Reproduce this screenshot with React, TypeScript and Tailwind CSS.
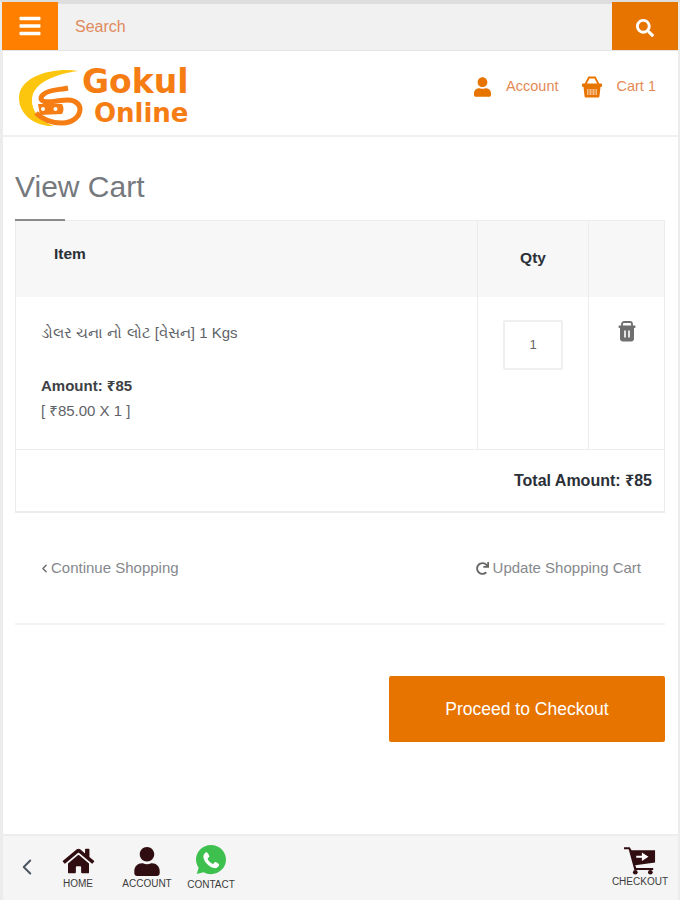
import React from "react";
import { FaBars, FaHome, FaRedo, FaSearch, FaUser } from "react-icons/fa";
import { ChevronLeft } from "lucide-react";

const sans = "font-['Liberation_Sans','Noto_Sans','DejaVu_Sans',sans-serif]";

const Logo = () => (
  <div className="flex items-center ml-[15px] mt-[8px]">
    <svg viewBox="0 0 65 60" className="w-[65px] h-[60px] shrink-0">
      {/* yellow crescent */}
      <path d="M60 4 C38 0 1 8 1 31 C1 48 18 60 36 59 C22 54 13 44 14 32 C15 18 32 8 60 4Z" fill="#fcc60e" />
      {/* orange S and cart body */}
      <path
        d="M50 21 C40 23 30 23 26 27 C22 30 22 33 26 34.5 C31 36 42 33 50 33 C58 33 62 38 62 42 C62 50 54 56 44 56 C36 56 26 54 18 46"
        fill="none"
        stroke="#f57d13"
        strokeWidth="5"
      />
      <path d="M20 37 L44 37 C46 40 46 44 44 47 L22 48Z" fill="#f57d13" />
      <circle cx="25" cy="42" r="2" fill="#fff" />
      <circle cx="37.5" cy="42" r="2" fill="#fff" />
    </svg>
    <div className="flex flex-col items-end font-['DejaVu_Sans',sans-serif] font-bold text-[#f57d13] -ml-px">
      <span className="text-[33px] leading-[33px]">Gokul</span>
      <span className="text-[26px] leading-[31px]">Online</span>
    </div>
  </div>
);

const Basket = () => (
  <svg viewBox="0 0 20 22" className="w-[20px] h-[22px] mr-[15px]" fill="#e87400">
    <path d="M3 9 L7 1.5 H13 L17 9" fill="none" stroke="#e87400" strokeWidth="1.8" />
    <rect x="0" y="7.5" width="20" height="3.5" rx="1" />
    <path d="M1.5 11 H18.5 L17.5 20 C17.4 21 16.8 21.5 16 21.5 H4 C3.2 21.5 2.6 21 2.5 20Z" />
    <path d="M5 13 H15 V19 H5Z" fill="#f6c08e" />
    <path d="M7 13 V19 M10 13 V19 M13 13 V19" stroke="#e87400" strokeWidth="1" />
  </svg>
);

const Trash = () => (
  <svg viewBox="0 0 18 21" className="w-[18px] h-[21px]" fill="#6f6f6f">
    <path d="M4 5 V3 C4 1.8 5 1 6 1 H12 C13 1 14 1.8 14 3 V5" fill="none" stroke="#6f6f6f" strokeWidth="1.8" />
    <rect x="0.5" y="4.5" width="17" height="2.5" rx="1" />
    <path d="M2 7 H16 V17.5 C16 19.4 14.8 20.5 13 20.5 H5 C3.2 20.5 2 19.4 2 17.5Z" />
    <rect x="6" y="9.5" width="2" height="7" fill="#e4e4e4" />
    <rect x="10" y="9.5" width="2" height="7" fill="#e4e4e4" />
  </svg>
);

const WhatsApp = () => (
  <svg viewBox="0 0 32 32" className="w-[32px] h-[32px]">
    <path d="M16 1 C7.7 1 1 7.5 1 15.6 C1 18.6 2 21.4 3.6 23.7 L1.8 30 L8.6 28.3 C10.8 29.5 13.3 30.2 16 30.2 C24.3 30.2 31 23.7 31 15.6 C31 7.5 24.3 1 16 1Z" fill="#3ec04f" />
    <path d="M11.6 8.2 C10.6 8.2 8.4 9.8 8.4 12.6 C8.4 16 11 19 12.6 20.6 C15 23 18.2 24.4 20.4 24.2 C22.6 24 24.2 22.2 24.2 20.6 C24.2 19.8 21 18 20.2 18 C19.4 18 18.6 20 18 20 C16.4 19.8 13 16.6 12.6 14.8 C12.6 14 14.4 13.4 14.4 12.6 C14.4 11.6 12.6 8.2 11.6 8.2Z" fill="#fff" />
  </svg>
);

const CheckoutCart = () => (
  <svg viewBox="0 0 34 30" className="w-[32px] h-[29px]" fill="#2f0d10">
    <path d="M0 1 H6 L8 4 H33 V17 L12 20 L13 23 H31 V25 H11 L5 3 H0Z" />
    <circle cx="12" cy="27.5" r="2.5" />
    <circle cx="28" cy="27.5" r="2.5" />
    <path d="M13 10 H19 V6.5 L26 11 L19 15.5 V12 H13Z" fill="#fff" />
  </svg>
);

export default function App() {
  return (
    <div className={`${sans} w-full h-[900px] overflow-hidden bg-[#ececec] pl-[2px] pr-[2px] flex flex-col`}>
      <div className="h-[2px] shrink-0 -mx-[2px] bg-[#dedede]" />

      {/* Search bar */}
      <div className="flex h-[49px] shrink-0 bg-[#f1f1f1] border-b border-[#e4e4e4]">
        <div className="w-[56px] bg-[#ff7f00] flex items-center justify-center">
          <FaBars className="text-white w-[24px] h-[24px]" />
        </div>
        <div className="flex-1 border-t-2 border-[#dedede] pl-[17px] flex items-center text-[16px] text-[#e08a5c]">Search</div>
        <div className="w-[66px] bg-[#e87400] flex items-center justify-center">
          <FaSearch className="text-white w-[18px] h-[18px] mt-[3px]" />
        </div>
      </div>

      <div className="flex-1 ml-px bg-white flex flex-col min-h-0">
        {/* Logo row */}
        <div className="h-[86px] shrink-0 border-b-2 border-[#f1f1f1] flex items-center justify-between">
          <Logo />
          <div className="flex items-center text-[14.5px] text-[#e58a55] pr-[22px] -mt-[13px]">
            <FaUser className="text-[#e87400] w-[17px] h-[20px] mr-[15px]" />
            <span className="mr-[23px]">Account</span>
            <Basket />
            <span>Cart 1</span>
          </div>
        </div>

        {/* Page title */}
        <div className="pl-[12px] pr-[13px]">
          <h1 className="text-[30px] leading-[36px] text-[#75797e] mt-[32px]">View Cart</h1>
          <div className="w-[50px] h-[2px] bg-[#8a8a8a] mt-[14px] relative z-10" />

          {/* Cart table */}
          <div className="-mt-[1px] border border-[#ececec] border-b-2 text-[15px] text-[#5f6368]">
            <div className="grid grid-cols-[462px_111px_1fr] h-[76px] bg-[#f7f7f7] font-bold text-[15.5px] text-[#2b3038]">
              <div className="pl-[38px] pt-[24px] leading-[18px] border-r border-[#ececec]">Item</div>
              <div className="pt-[28px] leading-[18px] text-center border-r border-[#ececec]">Qty</div>
              <div />
            </div>
            <div className="grid grid-cols-[462px_111px_1fr] h-[153px] border-b border-[#ececec]">
              <div className="pl-[25px] pt-[26px] border-r border-[#ececec]">
                <div className="leading-[20px]">ડોલર ચના નો લોટ [વેસન] 1 Kgs</div>
                <div className="mt-[33px] leading-[20px] font-bold text-[#3d4045]">Amount: ₹85</div>
                <div className="mt-[5px] leading-[20px]">[ ₹85.00 X 1 ]</div>
              </div>
              <div className="border-r border-[#ececec] flex justify-center pt-[23px]">
                <div className="w-[60px] h-[50px] border-2 border-[#efefef] rounded-[2px] flex items-center justify-center text-[13px] text-[#666]">1</div>
              </div>
              <div className="flex justify-center pt-[24px]">
                <Trash />
              </div>
            </div>
            <div className="h-[61px] flex items-center justify-end pr-[12px] font-bold text-[16px] text-[#2b3038]">Total Amount: ₹85</div>
          </div>

          {/* Links */}
          <div className="flex justify-between items-center h-[112px] border-b-2 border-[#f3f3f3] pl-[23px] pr-[24px] text-[15px] text-[#85888c]">
            <div className="flex items-center">
              <ChevronLeft className="w-[13px] h-[15px] text-[#666]" strokeWidth={2.5} />
              Continue Shopping
            </div>
            <div className="flex items-center">
              <FaRedo className="w-[13px] h-[13px] text-[#666] mr-[4px]" />
              Update Shopping Cart
            </div>
          </div>

          <div className="flex justify-end mt-[51px]">
            <div className="w-[276px] h-[66px] rounded-[2px] bg-[#e87400] text-white text-[17.5px] flex items-center justify-center">Proceed to Checkout</div>
          </div>
        </div>

        <div className="flex-1" />

        {/* Bottom bar */}
        <div className="h-[66px] shrink-0 bg-[#f5f5f5] border-t-2 border-[#ededed] flex items-start text-[10px] leading-[11px] text-[#3c3c3c]">
          <ChevronLeft className="w-[26px] h-[26px] text-[#4a5560] mt-[18px] ml-[11px]" strokeWidth={1.8} />
          <div className="w-[44px] ml-[16px] flex flex-col items-center pt-[11px]">
            <FaHome className="w-[33px] h-[28px] text-[#2f0d10]" />
            <span className="mt-[3px]">HOME</span>
          </div>
          <div className="w-[52px] ml-[21px] flex flex-col items-center pt-[11px]">
            <FaUser className="w-[28px] h-[29px] text-[#2f0d10]" />
            <span className="mt-[2px]">ACCOUNT</span>
          </div>
          <div className="w-[50px] ml-[13px] flex flex-col items-center pt-[8px]">
            <WhatsApp />
            <span className="mt-[3px]">CONTACT</span>
          </div>
          <div className="ml-auto mr-[10px] flex flex-col items-center pt-[10px]">
            <CheckoutCart />
            <span className="mt-[1px]">CHECKOUT</span>
          </div>
        </div>
      </div>
    </div>
  );
}
